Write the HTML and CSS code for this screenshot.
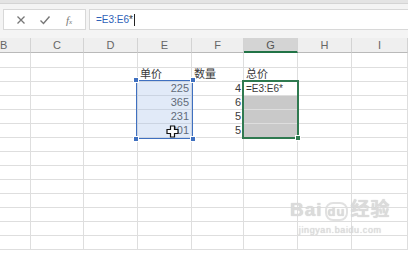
FILE: index.html
```html
<!DOCTYPE html>
<html lang="zh-CN">
  <head>
    <meta charset="UTF-8" />
    <title>Sheet</title>
    <link rel="stylesheet" href="styles.css">
  </head>
  <body>
    <div class="ribbon"></div>
    <div class="fbar">
      <div class="fbtns">
        <svg class="ic" width="10" height="10" viewBox="0 0 10 10"><path d="M1.5 1.5L8.5 8.5M8.5 1.5L1.5 8.5" stroke="#777" stroke-width="1.3"/></svg>
        <svg class="ic" width="12" height="10" viewBox="0 0 12 10"><path d="M1.5 5.5L4.5 8.5L10.5 1.5" stroke="#777" stroke-width="1.4" fill="none"/></svg>
        <span class="fx">f<small>x</small></span>
      </div>
      <div class="finput"><span class="ref">=E3:E6</span>*<span class="caret"></span></div>
    </div>

    <div class="sheet" id="sheet">
      <div class="sel sel-e">
        <i class="hd tl"></i><i class="hd tr"></i><i class="hd bl"></i><i class="hd br"></i>
      </div>
      <div class="sel sel-g"><i class="fill"></i></div>
      <svg class="mcur" width="13" height="13" viewBox="0 0 13 13"><path d="M4.5 1H8.5V4.5H12V8.5H8.5V12H4.5V8.5H1V4.5H4.5Z" fill="#fff" stroke="#111" stroke-width="1.2"/></svg>
    </div>

    <div class="mark">
      <div class="logo">Bai<span class="paw">du</span>经验</div>
      <div class="url">jingyan.baidu.com</div>
    </div>

    <script>
      var COLS = ["B", "C", "D", "E", "F", "G", "H", "I"];
      // row index -> {column: value}
      var DATA = {
        2: { E: "单价", F: "数量", G: "总价" },
        3: { E: "225", F: "4", G: "=E3:E6*" },
        4: { E: "365", F: "6" },
        5: { E: "231", F: "5" },
        6: { E: "201", F: "5" }
      };
      var sheet = document.getElementById("sheet");

      for (var c = 0; c < COLS.length; c++) {
        var h = document.createElement("div");
        h.className = "cell head";
        if (c == 0) h.className += " cut";
        if (COLS[c] == "G") h.className += " on";
        h.innerText = COLS[c];
        sheet.appendChild(h);
      }
      for (var r = 1; r <= 14; r++) {
        for (var c = 0; c < COLS.length; c++) {
          var cell = document.createElement("div");
          var v = DATA[r] && DATA[r][COLS[c]];
          cell.className = "cell";
          if (v) {
            cell.innerText = v;
            if (/^[0-9]+$/.test(v)) cell.className += " num";
            if (v.charAt(0) == "=") cell.className += " edit";
          }
          if (COLS[c] == "G" && r >= 4 && r <= 6) cell.className += " grey";
          sheet.appendChild(cell);
        }
      }
    </script>
  </body>
</html>
```

FILE: styles.css
```css
body {
  margin: 0;
  width: 408px;
  height: 253px;
  overflow: hidden;
  background: #fff;
  font-family: "Liberation Sans", "Noto Sans CJK SC", sans-serif;
  font-size: 11px;
  color: #3a3a3a;
  position: relative;
}
.ribbon {
  height: 3px;
  background: #e4e4e4;
  border-bottom: 1px solid #d4d4d4;
}
.fbar {
  display: flex;
  gap: 3px;
  height: 34px;
  padding: 5px 0 0 3px;
  box-sizing: border-box;
  background: #f4f4f4;
}
.fbtns,
.finput {
  height: 21px;
  background: #fff;
  border: 1px solid #d8d8d8;
  box-sizing: border-box;
  display: flex;
  align-items: center;
}
.fbtns {
  width: 83px;
  padding-left: 12px;
  gap: 13px;
}
.fx {
  font-family: "Liberation Serif", serif;
  font-style: italic;
  color: #777;
  font-size: 11px;
  margin-left: 2px;
}
.fx small {
  font-size: 7px;
}
.finput {
  flex: 1;
  border-right: none;
  padding-left: 6px;
  font-size: 10px;
  color: #333;
}
.ref {
  color: #2d62b8;
}
.caret {
  display: inline-block;
  width: 1px;
  height: 12px;
  background: #222;
  margin-left: 1px;
}
.sheet {
  position: relative;
  display: grid;
  grid-template-columns: 31px 53px 54px 54px 52px 54px 54px 1fr;
  grid-template-rows: 15px 15px repeat(13, 14px);
}
.cell {
  border-right: 1px solid #dedede;
  border-bottom: 1px solid #dedede;
  box-sizing: border-box;
  line-height: 13px;
  padding: 0 2px;
  white-space: nowrap;
  overflow: visible;
}
.cell.num {
  text-align: right;
}
.cell.edit {
  font-size: 10px;
}
.cell.grey {
  background: #c9c9c9;
}
.cell.head {
  background: #efefef;
  color: #666;
  text-align: center;
  line-height: 15px;
  border-right-color: #d3d3d3;
  border-bottom: 1px solid #b9b9b9;
}
.cell.head.cut {
  text-align: left;
  padding-left: 0;
}
.cell.head.on {
  background: #d4d4d4;
  color: #555;
  border-bottom: 2px solid #217346;
}
.sel {
  position: absolute;
  top: -2px;
  left: -2px;
  right: -1px;
  bottom: -1px;
  z-index: 2;
}
.sel-e {
  grid-column: 4 / 5;
  grid-row: 4 / 8;
  border: 1.5px solid #3f70c0;
  background: rgba(170, 195, 235, 0.35);
}
.sel-g {
  grid-column: 6 / 7;
  grid-row: 4 / 8;
  border: 2px solid #2f7a50;
}
.hd {
  position: absolute;
  width: 4px;
  height: 4px;
  background: #3f70c0;
  border: 1px solid #fff;
}
.tl { left: -4px; top: -4px; }
.tr { right: -4px; top: -4px; }
.bl { left: -4px; bottom: -4px; }
.br { right: -4px; bottom: -4px; }
.fill {
  position: absolute;
  right: -4px;
  bottom: -4px;
  width: 4px;
  height: 4px;
  background: #2f7a50;
  border: 1px solid #fff;
}
.mcur {
  position: absolute;
  left: 166px;
  top: 87px;
  z-index: 3;
}
.mark {
  position: absolute;
  left: 290px;
  top: 198px;
  color: rgba(222, 222, 222, 0.9);
  text-shadow: 0 0 1px #c4c4c4;
  text-align: center;
}
.logo {
  font-size: 19px;
  font-weight: bold;
  line-height: 24px;
  letter-spacing: 1px;
}
.paw {
  font-size: 13px;
  border: 2px solid rgba(222, 222, 222, 0.9);
  border-radius: 8px;
  padding: 0 1px;
  margin: 0 2px;
}
.url {
  font-size: 9px;
  line-height: 12px;
  letter-spacing: 0.6px;
}
```
